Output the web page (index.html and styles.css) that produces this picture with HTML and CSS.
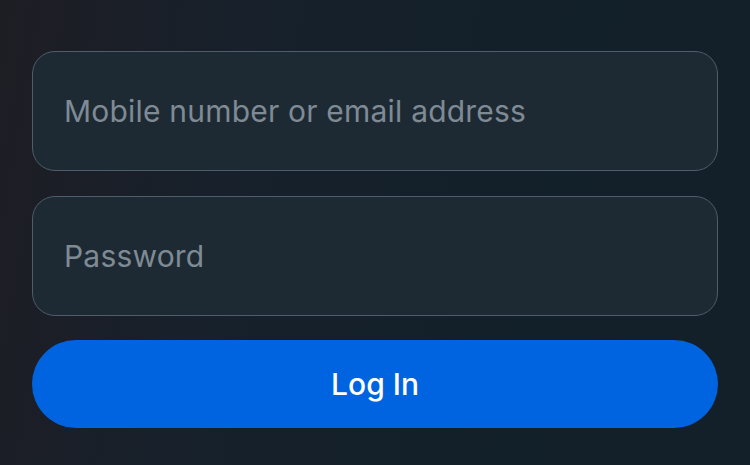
FILE: index.html
```html
<!DOCTYPE html>
<html>
<head>
<meta charset="utf-8">
<link rel="stylesheet" href="styles.css">
</head>
<body>
<div class="form">
  <div class="field"><span class="ph">Mobile number or email address</span></div>
  <div class="field"><span class="ph">Password</span></div>
  <button class="btn">Log In</button>
</div>
</body>
</html>
```
FILE: styles.css
```css
html, body {
  margin: 0;
  padding: 0;
  width: 750px;
  height: 465px;
  overflow: hidden;
}
body {
  background: linear-gradient(100deg, #1e1d24 0%, #17202b 30%, #122029 70%, #13202a 100%);
  font-family: Inter, "Noto Sans", sans-serif;
}
.form {
  display: flex;
  flex-direction: column;
  padding: 51px 32px 0 32px;
  gap: 25px;
}
.field {
  box-sizing: border-box;
  height: 120px;
  border: 1.5px solid #4d5d69;
  border-radius: 23px;
  background: #1e2a33;
  display: flex;
  align-items: center;
  padding-left: 31px;
}
.ph {
  color: #7e8b95;
  font-size: 30px;
  font-weight: 400;
  letter-spacing: 0.2px;
}
.btn {
  margin-top: -1px;
  height: 88px;
  border: none;
  border-radius: 44px;
  background: #0064e0;
  color: #ffffff;
  font-family: Inter, "Noto Sans", sans-serif;
  font-size: 30px;
  font-weight: 500;
}
```
